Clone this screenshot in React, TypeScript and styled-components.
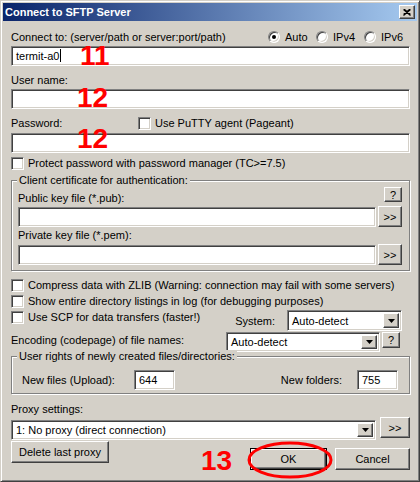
import styled, { createGlobalStyle, css } from 'styled-components';

const GlobalStyle = createGlobalStyle`
  html, body {
    margin: 0;
    padding: 0;
    background: #d4d0c8;
  }
  body {
    font-family: "Liberation Sans", Arial, sans-serif;
    font-size: 11px;
    color: #000;
  }
  * {
    box-sizing: border-box;
  }
`;

const sunken = css`
  border: 1px solid;
  border-color: #808080 #ffffff #ffffff #808080;
  box-shadow: inset 1px 1px 0 #404040, inset -1px -1px 0 #d4d0c8;
`;

const raised = css`
  border: 1px solid;
  border-color: #ffffff #404040 #404040 #ffffff;
  box-shadow: inset -1px -1px 0 #808080, inset 1px 1px 0 #d4d0c8;
`;

const Window = styled.div`
  position: relative;
  width: 420px;
  height: 482px;
  padding: 2px;
  background: #d4d0c8;
  border: 1px solid;
  border-color: #d4d0c8 #404040 #404040 #d4d0c8;
  box-shadow: inset 1px 1px 0 #ffffff, inset -1px -1px 0 #808080;
`;

const TitleBar = styled.div`
  height: 18px;
  display: flex;
  align-items: center;
  justify-content: space-between;
  padding: 0 2px;
  background: linear-gradient(to right, #0a246a, #a6caf0);
  color: #fff;
  font-weight: bold;
  font-size: 11px;
`;

const CloseButton = styled.div`
  ${raised};
  width: 16px;
  height: 14px;
  background: #d4d0c8;
  display: flex;
  align-items: center;
  justify-content: center;
`;

const Body = styled.div`
  display: flex;
  flex-direction: column;
  padding: 0 7px 0 8px;
`;

const Row = styled.div<{ $mt?: number; $align?: string; $justify?: string }>`
  display: flex;
  align-items: ${p => p.$align ?? 'center'};
  justify-content: ${p => p.$justify ?? 'flex-start'};
  margin-top: ${p => p.$mt ?? 0}px;
`;

const Label = styled.div<{ $mt?: number; $w?: number; $pt?: number; $lh?: number }>`
  height: ${p => p.$lh ?? 16}px;
  line-height: ${p => p.$lh ?? 16}px;
  margin-top: ${p => p.$mt ?? 0}px;
  padding-top: ${p => p.$pt ?? 0}px;
  box-sizing: content-box;
  white-space: nowrap;
  ${p => (p.$w ? `width: ${p.$w}px; flex-shrink: 0;` : '')}
`;

const Field = styled.div<{ $mt?: number; $w?: number }>`
  ${sunken};
  background: #fff;
  height: 20px;
  flex-shrink: 0;
  margin-top: ${p => p.$mt ?? 0}px;
  padding: 0 4px;
  line-height: 18px;
  white-space: nowrap;
  ${p => (p.$w ? `width: ${p.$w}px;` : 'flex-grow: 1; min-width: 0;')}
`;

const Caret = styled.span`
  display: inline-block;
  width: 1px;
  height: 13px;
  margin-left: 1px;
  background: #000;
  vertical-align: -2px;
`;

const CheckLabel = styled.div<{ $mt?: number }>`
  display: flex;
  align-items: center;
  gap: 4px;
  height: 16px;
  margin-top: ${p => p.$mt ?? 0}px;
  white-space: nowrap;
`;

const CheckBox = styled.span`
  ${sunken};
  width: 13px;
  height: 13px;
  background: #fff;
  flex-shrink: 0;
`;

const RadioGroup = styled.div`
  display: flex;
  margin-left: auto;
`;

const RadioItem = styled.div<{ $w: number }>`
  display: flex;
  align-items: center;
  gap: 5px;
  width: ${p => p.$w}px;
`;

const RadioCircle = styled.span`
  width: 12px;
  height: 12px;
  border-radius: 50%;
  background: #fff;
  border: 1px solid;
  border-color: #808080 #ffffff #ffffff #808080;
  box-shadow: inset 1px 1px 0 #404040, inset -1px -1px 0 #d4d0c8;
  display: flex;
  align-items: center;
  justify-content: center;
  flex-shrink: 0;
`;

const RadioDot = styled.span`
  width: 4px;
  height: 4px;
  border-radius: 50%;
  background: #000;
`;

const Button = styled.div<{ $w: number; $h?: number; $mt?: number; $ml?: number }>`
  ${raised};
  width: ${p => p.$w}px;
  height: ${p => p.$h ?? 22}px;
  margin-top: ${p => p.$mt ?? 0}px;
  margin-left: ${p => p.$ml ?? 0}px;
  flex-shrink: 0;
  background: #d4d0c8;
  display: flex;
  align-items: center;
  justify-content: center;
  white-space: nowrap;
`;

const DefaultButton = styled(Button)`
  border: 1px solid #000;
  box-shadow: inset 1px 1px 0 #ffffff, inset -1px -1px 0 #404040, inset -2px -2px 0 #808080;
`;

const Combo = styled.div<{ $w?: number; $h?: number; $mt?: number }>`
  ${sunken};
  background: #fff;
  height: ${p => p.$h ?? 21}px;
  margin-top: ${p => p.$mt ?? 0}px;
  padding: 2px 2px 2px 4px;
  display: flex;
  align-items: center;
  flex-shrink: 0;
  ${p => (p.$w ? `width: ${p.$w}px;` : 'flex-grow: 1; min-width: 0;')}
`;

const ComboText = styled.span`
  flex: 1;
  white-space: nowrap;
`;

const ComboButton = styled.span`
  ${raised};
  width: 16px;
  height: 100%;
  background: #d4d0c8;
  display: flex;
  align-items: center;
  justify-content: center;
`;

const Group = styled.div<{ $mt?: number; $pad: string }>`
  position: relative;
  margin-top: ${p => p.$mt ?? 0}px;
  padding: ${p => p.$pad};
  border: 1px solid #808080;
  box-shadow: inset 1px 1px 0 #ffffff, 1px 1px 0 #ffffff;
  display: flex;
  flex-direction: column;
`;

const Legend = styled.div`
  position: absolute;
  top: -7px;
  left: 5px;
  padding: 0 2px;
  line-height: 13px;
  background: #d4d0c8;
  white-space: nowrap;
`;

const Split = styled.div<{ $gap?: number; $mr?: number; $mt?: number; $align?: string }>`
  display: flex;
  align-items: ${p => p.$align ?? 'center'};
  gap: ${p => p.$gap ?? 0}px;
  margin-right: ${p => p.$mr ?? 0}px;
  margin-top: ${p => p.$mt ?? 0}px;
`;

const Annotation = styled.div<{ $x: number; $y: number }>`
  position: absolute;
  left: ${p => p.$x}px;
  top: ${p => p.$y}px;
  font-family: "Liberation Sans", Arial, sans-serif;
  font-weight: bold;
  font-size: 28px;
  line-height: 28px;
  color: #ff0000;
  pointer-events: none;
`;

const Ring = styled.svg`
  position: absolute;
  left: 246px;
  top: 440px;
  pointer-events: none;
`;

const Arrow = () => (
  <svg width="7" height="4" viewBox="0 0 7 4">
    <polygon points="0,0 7,0 3.5,4" fill="#000" />
  </svg>
);

const CloseGlyph = () => (
  <svg width="8" height="7" viewBox="0 0 8 7">
    <path d="M0.5 0.5 L7.5 6.5 M7.5 0.5 L0.5 6.5 M1.5 0.5 L7.5 5.5 M6.5 0.5 L0.5 5.5" stroke="#000" strokeWidth="1.2" fill="none" />
  </svg>
);

const Check = ({ label, mt }: { label: string; mt?: number }) => (
  <CheckLabel $mt={mt}>
    <CheckBox />
    <span>{label}</span>
  </CheckLabel>
);

const Radio = ({ label, w, on }: { label: string; w: number; on?: boolean }) => (
  <RadioItem $w={w}>
    <RadioCircle>{on && <RadioDot />}</RadioCircle>
    <span>{label}</span>
  </RadioItem>
);

const Select = ({ value, w, h, mt }: { value: string; w?: number; h?: number; mt?: number }) => (
  <Combo $w={w} $h={h} $mt={mt}>
    <ComboText>{value}</ComboText>
    <ComboButton>
      <Arrow />
    </ComboButton>
  </Combo>
);

export default function App() {
  return (
    <>
      <GlobalStyle />
      <Window>
        <TitleBar>
          <span>Connect to SFTP Server</span>
          <CloseButton>
            <CloseGlyph />
          </CloseButton>
        </TitleBar>
        <Body>
          <Row $mt={8}>
            <Label>Connect to: (server/path or server:port/path)</Label>
            <RadioGroup>
              <Radio label="Auto" w={48} on />
              <Radio label="IPv4" w={48} />
              <Radio label="IPv6" w={46} />
            </RadioGroup>
          </Row>
          <Field $mt={1}>
            termit-a0
            <Caret />
          </Field>

          <Label $mt={6}>User name:</Label>
          <Field $mt={1} />

          <Row $mt={6}>
            <Label $w={127}>Password:</Label>
            <Check label="Use PuTTY agent (Pageant)" />
          </Row>
          <Field $mt={2} />

          <Check label="Protect password with password manager (TC>=7.5)" mt={2} />

          <Group $mt={9} $pad="6px 7px 5px 6px">
            <Legend>Client certificate for authentication:</Legend>
            <Row $align="flex-start" $justify="space-between">
              <Label $pt={5} $lh={13}>Public key file (*.pub):</Label>
              <Button $w={18} $h={15}>?</Button>
            </Row>
            <Row $mt={1} $align="flex-start">
              <Field $mt={1} />
              <Button $w={24} $h={21} $ml={2}>&gt;&gt;</Button>
            </Row>
            <Label $mt={2} $lh={13}>Private key file (*.pem):</Label>
            <Row $mt={2} $align="flex-start">
              <Field $mt={1} />
              <Button $w={24} $h={21} $ml={2}>&gt;&gt;</Button>
            </Row>
          </Group>

          <Check label="Compress data with ZLIB (Warning: connection may fail with some servers)" mt={6} />
          <Check label="Show entire directory listings in log (for debugging purposes)" />
          <Row $align="flex-start" $justify="space-between">
            <Check label="Use SCP for data transfers (faster!)" />
            <Split $mt={1} $mr={8} $gap={12}>
              <Label>System:</Label>
              <Select value="Auto-detect" w={115} />
            </Split>
          </Row>

          <Row $mt={1} $align="flex-start" $justify="space-between">
            <Label>Encoding (codepage) of file names:</Label>
            <Split $mr={10} $gap={2} $align="flex-start">
              <Select value="Auto-detect" w={154} h={20} />
              <Button $w={18} $h={16}>?</Button>
            </Split>
          </Row>

          <Group $mt={4} $pad="13px 11px 3px 10px">
            <Legend>User rights of newly created files/directories:</Legend>
            <Row $justify="space-between">
              <Split>
                <Label $w={112}>New files (Upload):</Label>
                <Field $w={41}>644</Field>
              </Split>
              <Split $gap={15}>
                <Label>New folders:</Label>
                <Field $w={41}>755</Field>
              </Split>
            </Row>
          </Group>

          <Label $mt={7}>Proxy settings:</Label>
          <Row $align="flex-start">
            <Select value="1: No proxy (direct connection)" h={20} mt={3} />
            <Button $w={30} $h={21} $ml={4}>&gt;&gt;</Button>
          </Row>

          <Row $mt={1} $align="flex-start" $justify="space-between">
            <Button $w={98}>Delete last proxy</Button>
            <Split $gap={8} $align="flex-start">
              <DefaultButton $w={77} $mt={7}>OK</DefaultButton>
              <Button $w={75} $mt={7}>Cancel</Button>
            </Split>
          </Row>
        </Body>

        <Annotation $x={79} $y={41}>11</Annotation>
        <Annotation $x={76} $y={83}>12</Annotation>
        <Annotation $x={76} $y={124}>12</Annotation>
        <Annotation $x={200} $y={446}>13</Annotation>
        <Ring width="86" height="38" viewBox="0 0 86 38">
          <ellipse cx="43" cy="19" rx="41" ry="17" fill="none" stroke="#ff0000" strokeWidth="3" />
        </Ring>
      </Window>
    </>
  );
}
